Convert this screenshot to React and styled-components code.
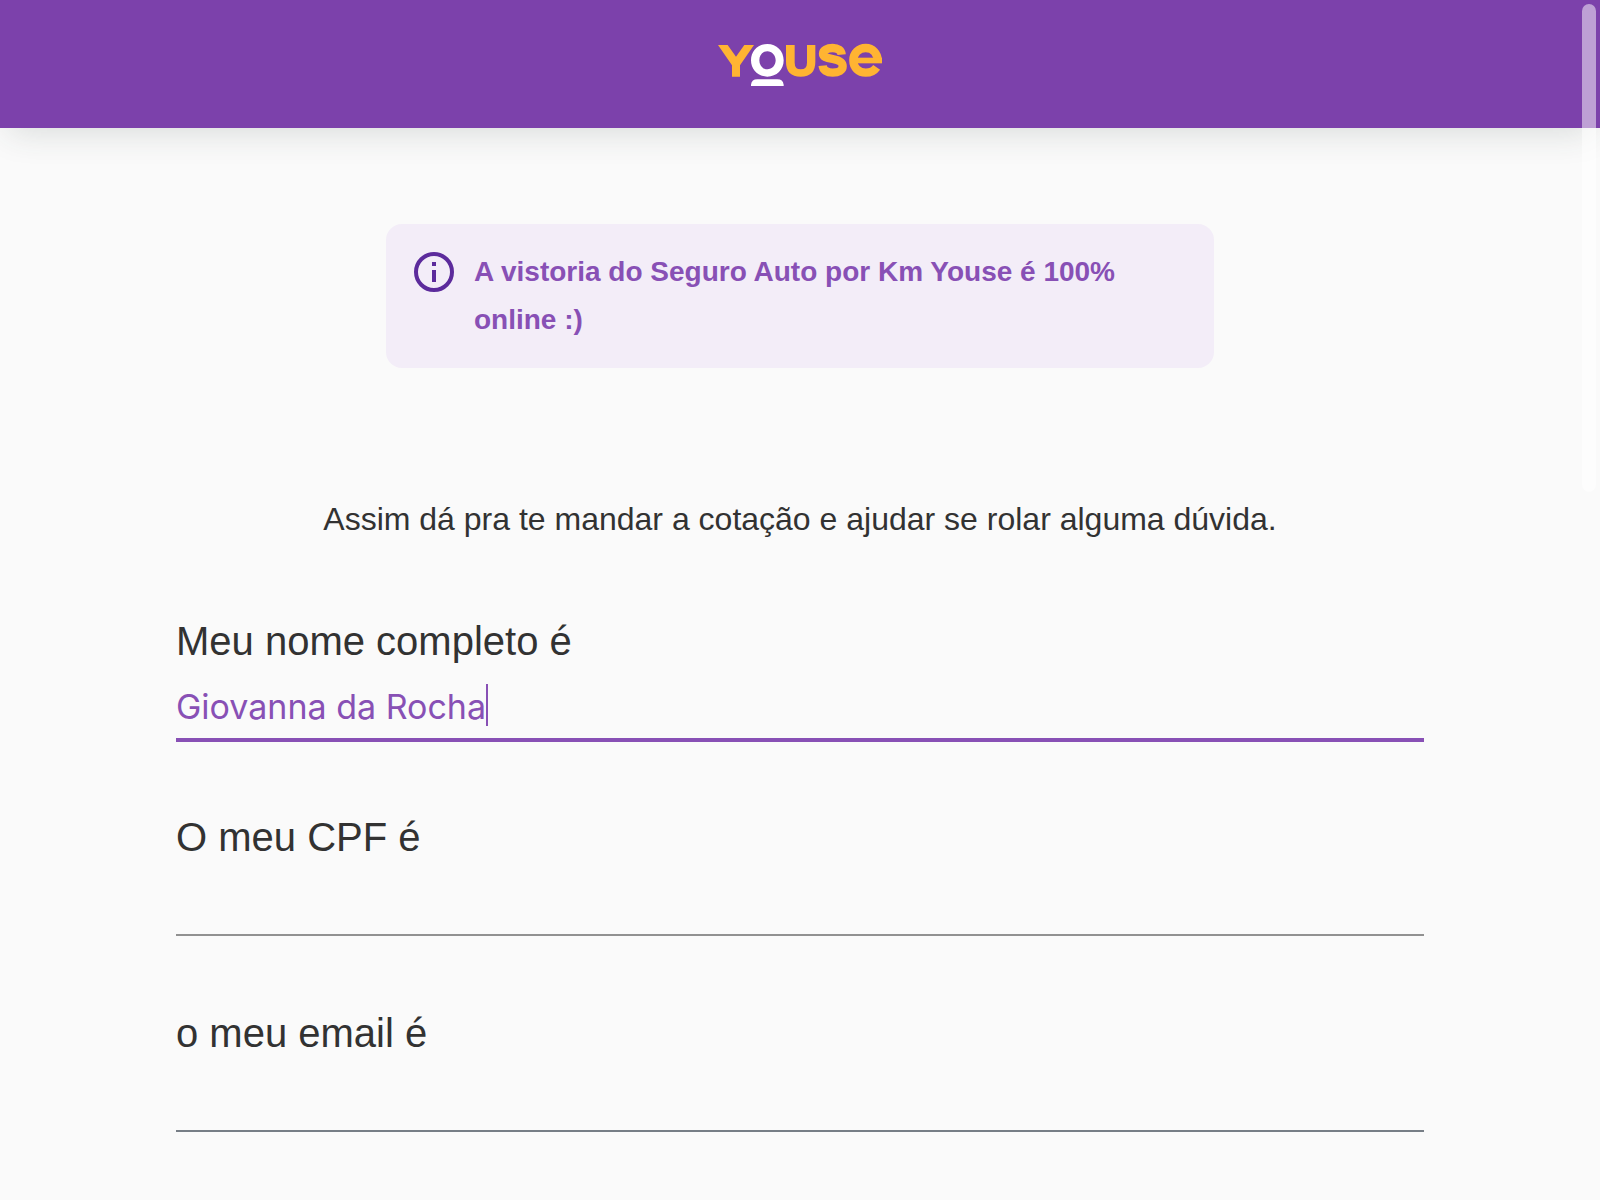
import React, { useId, useState } from "react";
import styled, { createGlobalStyle } from "styled-components";

const color = {
  brand: "#7c41ab",
  accent: "#8850b5",
  icon: "#5c2b9c",
  amber: "#ffb432",
  ink: "#323232",
  page: "#fafafa",
  notice: "#f3edf8",
};

const GlobalStyle = createGlobalStyle`
  * { box-sizing: border-box; }
  body {
    margin: 0;
    background: ${color.page};
    color: ${color.ink};
    font-family: "Liberation Sans", Arial, sans-serif;
    scrollbar-width: none;
  }
`;

const Header = styled.header`
  display: flex;
  align-items: center;
  justify-content: center;
  height: 128px;
  background: ${color.brand};
  box-shadow: 0 12px 32px -8px rgba(46, 61, 56, 0.16);
`;

const LogoSvg = styled.svg`
  display: block;
  width: 164px;
  height: 44px;
`;

const Main = styled.main`
  display: flex;
  flex-direction: column;
  align-items: center;
  padding: 96px 11% 66px;
`;

const Notice = styled.section`
  display: flex;
  gap: 16px;
  width: 100%;
  max-width: 828px;
  padding: 24px;
  border-radius: 16px;
  background: ${color.notice};
`;

const NoticeIcon = styled.svg`
  flex: none;
  width: 48px;
  height: 48px;
`;

const NoticeText = styled.p`
  margin: 0;
  color: ${color.accent};
  font-size: 28px;
  font-weight: 700;
  line-height: 48px;
`;

const Intro = styled.p`
  margin: 128px 0 72px;
  font-size: 32px;
  line-height: 46px;
  text-align: center;
`;

const Form = styled.form`
  display: flex;
  flex-direction: column;
  gap: 72px;
  width: 100%;
`;

const FieldGroup = styled.div`
  display: flex;
  flex-direction: column;
  gap: 4px;
`;

const Label = styled.label`
  font-size: 40px;
  line-height: 54px;
`;

const InputLine = styled.div`
  display: flex;
  align-items: center;
  height: 66px;
  box-shadow: 0 ${(p) => (p.$active ? 4 : 2)}px 0 ${(p) => p.$line};
`;

const Input = styled.input`
  min-width: 0;
  height: 42px;
  padding: 2px 0 0;
  border: 0;
  outline: 0;
  background: transparent;
  color: ${color.accent};
  caret-color: ${(p) => (p.$active ? "transparent" : color.accent)};
  font-family: Inter, sans-serif;
  font-size: 34px;
  line-height: 40px;
  ${(p) => (p.$active ? "field-sizing: content;" : "flex: 1;")}
`;

const Caret = styled.span`
  width: 2px;
  height: 42px;
  background: ${color.accent};
`;

const ScrollThumb = styled.div`
  position: fixed;
  top: 4px;
  right: 4px;
  width: 14px;
  height: 488px;
  border-radius: 7px;
  background: rgba(255, 255, 255, 0.5);
`;

function Logo() {
  return (
    <LogoSvg viewBox="54 36 492 132" role="img" aria-label="Youse">
      <g fill={color.amber}>
        <path d="M54 45H83L108 80L133 45H162L120 106V140H96V106Z" />
        <path d="M258 45H284V98Q284 118 302 118Q321 118 321 98V45H346V96Q346 140 302 140Q258 140 258 96Z" />
      </g>
      <g fill="none" stroke={color.amber} strokeWidth="25">
        <path d="M425 74C424 61 414 54 398 54C381 54 369 61 369 71C369 80 377 83 398 87C421 91 428 97 428 109C428 121 416 128 398 128C380 128 369 120 368 107" />
        <path d="M497 54C476 54 460 70 460 91C460 113 476 128 497 128C512 128 523 122 530 112M497 54C517 54 533 69 534 96" />
        <path strokeWidth="17" d="M460 91.500H546" />
      </g>
      <g fill="#fff">
        <path
          fillRule="evenodd"
          d="M202 42C230 42 251 63 251 91S230 140 202 140S153 119 153 91S174 42 202 42ZM202 64C188 64 178 76 178 91S188 118 202 118S227 106 227 91S216 64 202 64Z"
        />
        <path d="M153 168V164Q155 148 172 148H232Q249 148 251 164V168Z" />
      </g>
    </LogoSvg>
  );
}

function InfoIcon() {
  return (
    <NoticeIcon viewBox="0 0 48 48" aria-hidden="true">
      <circle cx="24" cy="24" r="18" fill="none" stroke={color.icon} strokeWidth="4" />
      <path fill={color.icon} d="M22 14h4v4h-4zM22 22h4v12h-4z" />
    </NoticeIcon>
  );
}

function Field({ label, type = "text", initial = "", active = false, line }) {
  const id = useId();
  const [value, setValue] = useState(initial);
  return (
    <FieldGroup>
      <Label htmlFor={id}>{label}</Label>
      <InputLine $active={active} $line={line}>
        <Input
          id={id}
          type={type}
          $active={active}
          value={value}
          onChange={(e) => setValue(e.target.value)}
        />
        {active && <Caret aria-hidden="true" />}
      </InputLine>
    </FieldGroup>
  );
}

export default function App() {
  return (
    <>
      <GlobalStyle />
      <Header>
        <Logo />
      </Header>
      <Main>
        <Notice>
          <InfoIcon />
          <NoticeText>A vistoria do Seguro Auto por Km Youse é 100% online :)</NoticeText>
        </Notice>
        <Intro>Assim dá pra te mandar a cotação e ajudar se rolar alguma dúvida.</Intro>
        <Form>
          <Field label="Meu nome completo é" initial="Giovanna da Rocha" active line={color.accent} />
          <Field label="O meu CPF é" line="#919191" />
          <Field label="o meu email é" type="email" line="#777e86" />
        </Form>
      </Main>
      <ScrollThumb aria-hidden="true" />
    </>
  );
}
